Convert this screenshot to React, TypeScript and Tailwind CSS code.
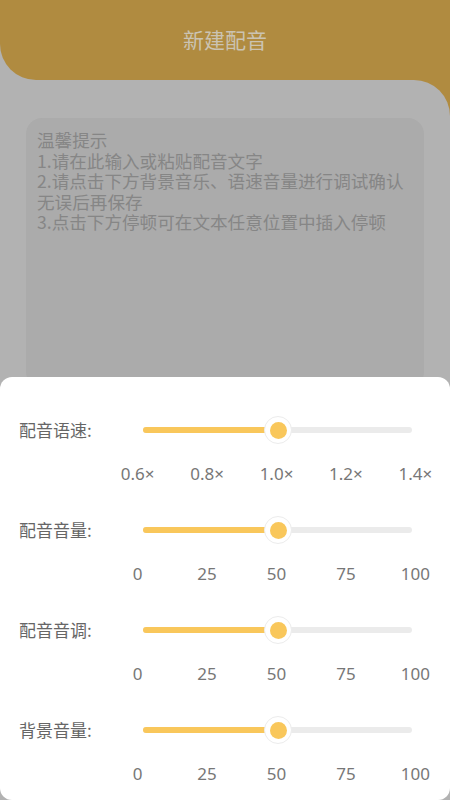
import React from "react";

const font = { fontFamily: '"Noto Sans CJK SC", "Noto Sans", sans-serif' };
const latin = { fontFamily: '"Noto Sans", "Noto Sans CJK SC", sans-serif' };

function SliderBlock({ label, ticks }: { label: string; ticks: string[] }) {
  return (
    <div className="flex flex-col">
      <div className="flex h-[40px] items-center">
        <div className="w-[143px] pl-[19px] text-[17px] leading-[20px] text-[#666666]">{label}</div>
        <div className="relative h-[6px] w-[269px] rounded-full bg-[#ebebeb]">
          <div className="absolute left-0 top-0 h-[6px] w-[135px] rounded-full bg-[#f9c75b]" />
          <div className="absolute left-[121px] top-[-11px] flex h-[28px] w-[28px] items-center justify-center rounded-full border border-[#ececec] bg-white">
            <div className="h-[17px] w-[17px] rounded-full bg-[#f9c75b]" />
          </div>
        </div>
      </div>
      <div
        className="ml-[103px] mt-[12px] grid h-[24px] w-[347px] grid-cols-5 items-center text-center text-[17px] leading-[24px] text-[#777777]"
        style={latin}
      >
        {ticks.map((t) => (
          <div key={t}>{t}</div>
        ))}
      </div>
      <div className="h-[24px]" />
    </div>
  );
}

export default function App() {
  const nums = ["0", "25", "50", "75", "100"];
  return (
    <div className="relative h-[800px] w-[450px] overflow-hidden bg-[#b2b2b2]" style={font}>
      <div className="bg-[#b2b2b2]">
        <div className="flex h-[80px] items-center justify-center rounded-bl-[36px] bg-[#b08b40] text-[21px] text-[#cbc3b2]">
          新建配音
        </div>
      </div>
      <div className="bg-[#b08b40]">
        <div className="h-[720px] rounded-tr-[36px] bg-[#b2b2b2] px-[26px] pt-[38px]">
          <div className="h-[270px] rounded-[16px] bg-[#ababab] pl-[11px] pr-[11px] pt-[12px] text-[17.6px] leading-[20.5px] text-[#868686]">
            <div>温馨提示</div>
            <div>1.请在此输入或粘贴配音文字</div>
            <div>2.请点击下方背景音乐、语速音量进行调试确认无误后再保存</div>
            <div>3.点击下方停顿可在文本任意位置中插入停顿</div>
          </div>
        </div>
      </div>
      <div className="absolute left-0 top-[377px] h-[423px] w-[450px] rounded-[12px] bg-white pt-[33px]">
        <SliderBlock label="配音语速:" ticks={["0.6×", "0.8×", "1.0×", "1.2×", "1.4×"]} />
        <SliderBlock label="配音音量:" ticks={nums} />
        <SliderBlock label="配音音调:" ticks={nums} />
        <SliderBlock label="背景音量:" ticks={nums} />
      </div>
    </div>
  );
}
